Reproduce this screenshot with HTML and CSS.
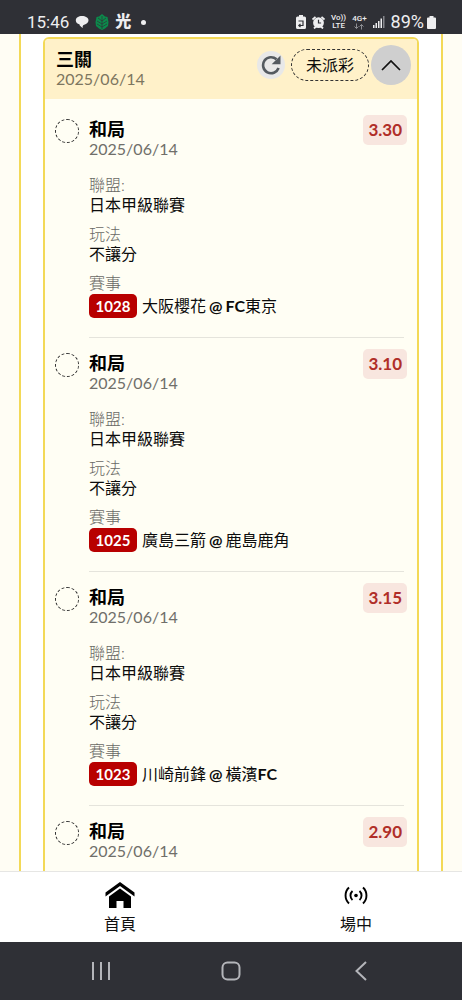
FILE: index.html
```html
<!DOCTYPE html>
<html lang="zh-Hant">
<head>
<meta charset="utf-8">
<meta name="viewport" content="width=device-width, initial-scale=1">
<title>三關</title>
<link rel="stylesheet" href="styles.css">
</head>
<body>
<div class="screen">
  <header class="status">
    <div class="status-left">
      <span class="clock">15:46</span>
      <svg width="14" height="14" viewBox="0 0 14 14" fill="#eeeef0"><path d="M7 1C3.500 1 .8 2.800.8 5.400c0 1.900 1.500 3.300 3.600 3.900.3 1.600 1.500 2.800 3.700 3.700-.6-1-.6-2 .1-2.800l1-.5C11.800 9.200 13.500 7.500 13.500 5.300 13.500 2.600 10.500 1 7 1z"/></svg>
      <svg width="14" height="16" viewBox="0 0 14 16"><path d="M7 0l3 2.500 2.500.5.500 3 .5 2-.5 4-3 2.500L7 16l-3-1.500L1 12 .5 8 1 6l.5-3L4 2.500z" fill="#0b8a4b"/><path d="M7 2v13M7 7l4-3M7 7L3 4M7 10l5-3M7 10L2 7M7 13l5-3M7 13l-5-3" stroke="#2f3036" stroke-width=".7" fill="none"/></svg>
      <span class="app">光</span>
      <span class="dot"></span>
    </div>
    <div class="status-right">
      <svg width="10" height="14" viewBox="0 0 10 14"><path d="M3 0h4v1.500h1.500Q10 1.500 10 3v9.500q0 1.500-1.500 1.500h-7Q0 14 0 12.500V3q0-1.500 1.500-1.500H3z" fill="#eeeef0"/><path d="M2.500 6h4.500v4.500H3M4.500 8.800L2.800 10.500l1.700 1.500" stroke="#2f3036" stroke-width="1.200" fill="none"/></svg>
      <svg width="13" height="13" viewBox="0 0 13 13"><path d="M.5 3.500L3.500.8M12.500 3.500L9.500.8M2 12.500l2-2M11 12.500l-2-2" stroke="#eeeef0" stroke-width="1.800"/><circle cx="6.500" cy="6.700" r="5.400" fill="#eeeef0"/><path d="M6.500 3.800v3.200h2.600" stroke="#2f3036" stroke-width="1.200" fill="none"/></svg>
      <span class="net"><span>Vo))</span><span>LTE</span></span>
      <span class="net"><span>4G+</span><svg width="10" height="7" viewBox="0 0 10 6"><path d="M2.500 0v5M.5 3l2 2 2-2M7.500 6V1M5.500 3l2-2 2 2" stroke="#8d8e93" fill="none"/></svg></span>
      <svg width="12" height="12" viewBox="0 0 12 12" fill="#eeeef0"><path d="M0 9h1.500v3H0zM2.500 7H4v5H2.500zM5 5h1.500v7H5zM7.500 2.500H9V12H7.500z"/><path d="M10 0h1.500v12H10z" fill="#85868b"/></svg>
      <span class="percent">89%</span>
      <svg width="9" height="13" viewBox="0 0 9 13" fill="#eeeef0"><path d="M2.500 0h4v1.500H8q1 0 1 1V12q0 1-1 1H1q-1 0-1-1V2.500q0-1 1-1h1.500z"/></svg>
    </div>
  </header>

  <main class="content">
    <div class="panel">
      <section class="card">
        <div class="card-head">
          <div class="head-text">
            <h1 class="title">三關</h1>
            <p class="date">2025/06/14</p>
          </div>
          <button class="refresh" type="button" aria-label="重新整理"><svg width="20" height="20" viewBox="0 0 20 20"><path d="M15.500 4.300A8 8 0 1 0 17.600 13" stroke="#545a60" stroke-width="2.600" fill="none"/><path d="M19.500.5v8.800h-8.800z" fill="#545a60"/></svg></button>
          <span class="pill">未派彩</span>
          <button class="toggle" type="button" aria-label="收合"><svg width="20" height="12" viewBox="0 0 20 12"><path d="M1 11l9-9 9 9" stroke="#111" stroke-width="1.700" fill="none"/></svg></button>
        </div>
        <div class="list">
          <article class="item">
            <span class="ring"></span>
            <div class="body">
              <div class="top"><div><h2 class="title">和局</h2><p class="date">2025/06/14</p></div><span class="odds">3.30</span></div>
              <dl class="facts">
                <div><dt>聯盟:</dt><dd>日本甲級聯賽</dd></div>
                <div><dt>玩法</dt><dd>不讓分</dd></div>
                <div><dt>賽事</dt><dd class="match"><span class="code">1028</span><span>大阪櫻花<b class="at">@</b><b>FC</b>東京</span></dd></div>
              </dl>
            </div>
          </article>
          <article class="item">
            <span class="ring"></span>
            <div class="body">
              <div class="top"><div><h2 class="title">和局</h2><p class="date">2025/06/14</p></div><span class="odds">3.10</span></div>
              <dl class="facts">
                <div><dt>聯盟:</dt><dd>日本甲級聯賽</dd></div>
                <div><dt>玩法</dt><dd>不讓分</dd></div>
                <div><dt>賽事</dt><dd class="match"><span class="code">1025</span><span>廣島三箭<b class="at">@</b>鹿島鹿角</span></dd></div>
              </dl>
            </div>
          </article>
          <article class="item">
            <span class="ring"></span>
            <div class="body">
              <div class="top"><div><h2 class="title">和局</h2><p class="date">2025/06/14</p></div><span class="odds">3.15</span></div>
              <dl class="facts">
                <div><dt>聯盟:</dt><dd>日本甲級聯賽</dd></div>
                <div><dt>玩法</dt><dd>不讓分</dd></div>
                <div><dt>賽事</dt><dd class="match"><span class="code">1023</span><span>川崎前鋒<b class="at">@</b>橫濱<b>FC</b></span></dd></div>
              </dl>
            </div>
          </article>
          <article class="item">
            <span class="ring"></span>
            <div class="body">
              <div class="top"><div><h2 class="title">和局</h2><p class="date">2025/06/14</p></div><span class="odds">2.90</span></div>
            </div>
          </article>
        </div>
      </section>
    </div>
  </main>

  <nav class="tabs">
    <a class="tab" href="#home"><svg width="30" height="28" viewBox="0 0 30 28"><path d="M.5 11.500L15 1l14.500 10.500v4L15 5 .5 15.500z"/><path d="M4 15.500L15 7.500l11 8V27h-7.500v-7h-7v7H4z"/></svg><span>首頁</span></a>
    <a class="tab" href="#live"><svg width="24" height="28" viewBox="0 0 24 28"><circle cx="12" cy="14.500" r="1.800"/><path d="M8.500 10a6 6 0 0 0 0 9M15.500 10a6 6 0 0 1 0 9M5 6.500a11 11 0 0 0 0 16M19 6.500a11 11 0 0 1 0 16" stroke="#000" stroke-width="1.900" fill="none"/></svg><span>場中</span></a>
  </nav>
  <footer class="system">
    <button type="button" aria-label="最近"><svg width="20" height="20" viewBox="0 0 20 20"><path d="M2 1v18M10 1v18M18 1v18"/></svg></button>
    <button type="button" aria-label="主畫面"><svg width="20" height="20" viewBox="0 0 20 20"><rect x="1.500" y="1.500" width="17" height="17" rx="5"/></svg></button>
    <button type="button" aria-label="返回"><svg width="20" height="20" viewBox="0 0 20 20"><path d="M15 1L5.500 10l9.500 9"/></svg></button>
  </footer>
</div>
</body>
</html>
```
FILE: styles.css
```css
* { box-sizing: border-box; }
body {
  margin: 0;
  background: #fffdf4;
  color: #0c0c0c;
  font: 16px/20px Lato, "Noto Sans CJK TC", sans-serif;
}
h1, h2, p, dl, dd { margin: 0; }
button { border: 0; padding: 0; font: inherit; }
svg { display: block; flex: none; }

.screen { display: flex; flex-direction: column; height: 100vh; overflow: hidden; }

.status {
  display: flex;
  flex: none;
  justify-content: space-between;
  padding: 10px 26px 0 27px;
  height: 34px;
  background: #2f3036;
  color: #eeeef0;
  font-family: Roboto, "Noto Sans CJK TC", sans-serif;
}
.status-left, .status-right { display: flex; align-items: center; height: 24px; }
.status-left { gap: 6px; }
.status-right { gap: 6px; }
.clock { font-size: 17px; }
.app { font-size: 16px; font-weight: 900; }
.dot { width: 5px; height: 5px; margin-left: 4px; border-radius: 50%; background: #eeeef0; }
.net { display: flex; flex-direction: column; align-items: center; font-size: 8px; line-height: 8px; font-weight: 500; }
.percent { font-size: 18px; margin-right: -3px; }

.content { flex: 1; min-height: 0; overflow: hidden; padding: 0 19px; }
.panel { padding: 3px 22px 0; background: #fff; border: solid #f3d957; border-width: 0 2px; }
.card {
  border: 2px solid #f3d957;
  border-radius: 6px;
  background: #fffef4;
  overflow: hidden;
}
.card-head {
  display: flex;
  align-items: center;
  height: 60px;
  padding: 0 6px 8px 11px;
  background: #fff1c9;
}
.head-text { flex: 1; padding-top: 7px; }
.title { font-size: 18px; line-height: 20px; font-weight: 700; color: #000; }
.date { font-size: 16px; line-height: 20px; color: #706f6a; }
.card-head .date { color: #7d765f; }
.refresh { display: grid; place-items: center; width: 28px; height: 28px; margin-right: 6px; border-radius: 50%; background: #e8e8e8; }
.pill { padding: 4px 14px; border: 1px dashed #333; border-radius: 16px; line-height: 22px; }
.toggle { display: grid; place-items: center; width: 40px; height: 40px; margin-left: 2px; border-radius: 50%; background: #cfcfcf; }

.list { padding: 5px 10px 0; }
.item { display: flex; gap: 10px; }
.ring { flex: none; width: 24px; height: 24px; margin-top: 15px; border: 1px dashed #333; border-radius: 50%; }
.body { flex: 1; padding: 15px 0 19px; border-bottom: 1px solid #e5e4dc; margin-right: 3px; }
.top { display: flex; justify-content: space-between; margin: -4px -3px 0 0; }
.top > div { padding-top: 4px; }
.odds {
  height: 30px;
  padding: 0 5px;
  border-radius: 5px;
  background: #f8e6df;
  color: #b02e28;
  font-size: 17px;
  line-height: 30px;
  font-weight: 700;
}
.facts { display: grid; gap: 9px; margin-top: 16px; }
.facts dt { color: #696965; font-weight: 300; }
.match { display: flex; align-items: center; gap: 5px; height: 25px; }
.at { margin: 0 3px; }
.code {
  width: 48px;
  border-radius: 5px;
  background: #b80000;
  color: #fff;
  font-size: 15px;
  font-weight: 700;
  line-height: 24px;
  text-align: center;
}

.tabs {
  display: flex;
  justify-content: center;
  gap: 176px;
  flex: none;
  height: 71px;
  padding: 9px 0 0 14px;
  border-top: 1px solid #e6e6e4;
  background: #fff;
}
.tab { display: flex; flex-direction: column; align-items: center; gap: 5px; width: 60px; color: #111; text-decoration: none; }
.tab svg { fill: #000; }
.system {
  display: flex;
  flex: none;
  justify-content: center;
  gap: 110px;
  height: 58px;
  background: #2f3036;
}
.system svg { fill: none; stroke: #b4b5ba; stroke-width: 2; }
.system button { background: none; }
```
